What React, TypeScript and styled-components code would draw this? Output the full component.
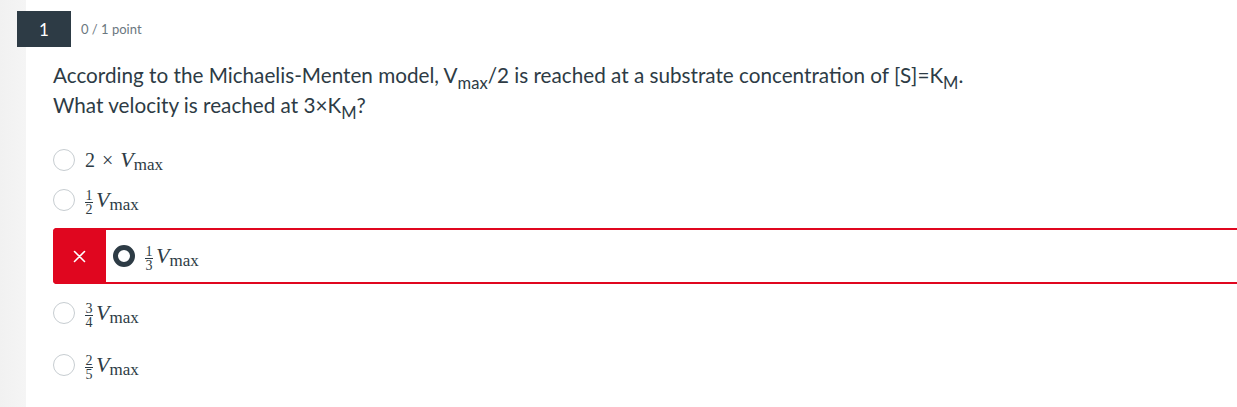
import React from "react";
import styled, { createGlobalStyle } from "styled-components";

const GlobalStyle = createGlobalStyle`
  html, body {
    margin: 0;
    padding: 0;
    background: #fff;
  }
  body {
    font-family: Lato, "Noto Sans", sans-serif;
    color: #2d3b45;
  }
`;

const Page = styled.div`
  min-height: 407px;
  background: linear-gradient(to right, #f1f1f1 0, #f5f5f5 26px, #fff 26px);
`;

const Header = styled.div`
  display: flex;
  align-items: center;
  padding: 11px 0 0 17px;
`;

const NumberBadge = styled.div`
  width: 54px;
  height: 36px;
  background: #2d3b45;
  color: #fff;
  font-size: 17px;
  display: flex;
  align-items: center;
  justify-content: center;
`;

const Points = styled.span`
  margin-left: 10px;
  font-size: 13px;
  color: #6b7780;
`;

const Body = styled.div`
  padding-left: 53px;
`;

const Question = styled.p`
  margin: 13px 0 0;
  font-size: 20.7px;
  line-height: 30px;
  color: #2d3b45;
`;

const Sub = styled.sub`
  font-size: 0.8em;
  line-height: 0;
  vertical-align: -0.38em;
`;

const Options = styled.div`
  margin-top: 20px;
  display: flex;
  flex-direction: column;
`;

const OptionRow = styled.div<{ $gap?: number; $height?: number }>`
  display: flex;
  align-items: center;
  margin-top: ${(p) => p.$gap ?? 0}px;
  height: ${(p) => p.$height ?? 40}px;
`;

const Radio = styled.span<{ $checked?: boolean }>`
  box-sizing: border-box;
  flex: none;
  width: 22px;
  height: 22px;
  border-radius: 50%;
  background: #fff;
  border: ${(p) => (p.$checked ? "5px solid #2d3b45" : "1px solid #c7cdd1")};
`;

const Answer = styled.span`
  margin-left: 10px;
  display: flex;
  align-items: center;
`;

const WrongBox = styled.div`
  margin-top: 8px;
  height: 56px;
  box-sizing: border-box;
  display: flex;
  align-items: stretch;
  border-top: 2px solid #e0061f;
  border-bottom: 2px solid #e0061f;
  border-radius: 4px 0 0 4px;
`;

const WrongMark = styled.div`
  width: 53px;
  margin: -2px 0;
  background: #e0061f;
  border-radius: 4px 0 0 4px;
  display: flex;
  align-items: center;
  justify-content: center;
`;

const WrongContent = styled.div`
  display: flex;
  align-items: center;
  padding-left: 7px;
`;

const Math = styled.span`
  font-family: "Liberation Serif", serif;
  color: #2d3b45;
  display: inline-flex;
  align-items: center;
  white-space: nowrap;
`;

const Var = styled.span`
  font-style: italic;
  font-size: 22px;
`;

const MathSub = styled.span`
  font-size: 17px;
  position: relative;
  top: 5px;
  margin-left: 0;
`;

const Times = styled.span`
  font-size: 20px;
  margin: 0 7px 0 7px;
`;

const Two = styled.span`
  font-size: 20px;
`;

const Frac = styled.span`
  display: inline-flex;
  flex-direction: column;
  align-items: center;
  font-size: 14px;
  line-height: 11px;
  margin-right: 3px;
  position: relative;
  top: 2px;
`;

const FracBar = styled.span`
  display: block;
  width: 8px;
  height: 1px;
  background: #2d3b45;
  margin: 1px 0;
`;

function Vmax() {
  return (
    <>
      <Var>V</Var>
      <MathSub>max</MathSub>
    </>
  );
}

function Fraction({ n, d }: { n: number; d: number }) {
  return (
    <Frac>
      <span>{n}</span>
      <FracBar />
      <span>{d}</span>
    </Frac>
  );
}

function Cross() {
  return (
    <svg width="13" height="13" viewBox="0 0 13 13">
      <path d="M1.5 1.5 L11.5 11.5 M11.5 1.5 L1.5 11.5" stroke="#fff" strokeWidth="1.6" strokeLinecap="round" />
    </svg>
  );
}

export default function App() {
  return (
    <>
      <GlobalStyle />
      <Page>
        <Header>
          <NumberBadge>1</NumberBadge>
          <Points>0 / 1 point</Points>
        </Header>
        <Body>
          <Question>
            According to the Michaelis-Menten model, V<Sub>max</Sub>/2 is reached at a substrate
            concentration of [S]=K<Sub>M</Sub>.
            <br />
            What velocity is reached at 3×K<Sub>M</Sub>?
          </Question>
          <Options>
            <OptionRow>
              <Radio />
              <Answer>
                <Math>
                  <Two>2</Two>
                  <Times>×</Times>
                  <Vmax />
                </Math>
              </Answer>
            </OptionRow>
            <OptionRow>
              <Radio />
              <Answer>
                <Math>
                  <Fraction n={1} d={2} />
                  <Vmax />
                </Math>
              </Answer>
            </OptionRow>
            <WrongBox>
              <WrongMark>
                <Cross />
              </WrongMark>
              <WrongContent>
                <Radio $checked />
                <Answer>
                  <Math>
                    <Fraction n={1} d={3} />
                    <Vmax />
                  </Math>
                </Answer>
              </WrongContent>
            </WrongBox>
            <OptionRow $gap={9}>
              <Radio />
              <Answer>
                <Math>
                  <Fraction n={3} d={4} />
                  <Vmax />
                </Math>
              </Answer>
            </OptionRow>
            <OptionRow $gap={12}>
              <Radio />
              <Answer>
                <Math>
                  <Fraction n={2} d={5} />
                  <Vmax />
                </Math>
              </Answer>
            </OptionRow>
          </Options>
        </Body>
      </Page>
    </>
  );
}
